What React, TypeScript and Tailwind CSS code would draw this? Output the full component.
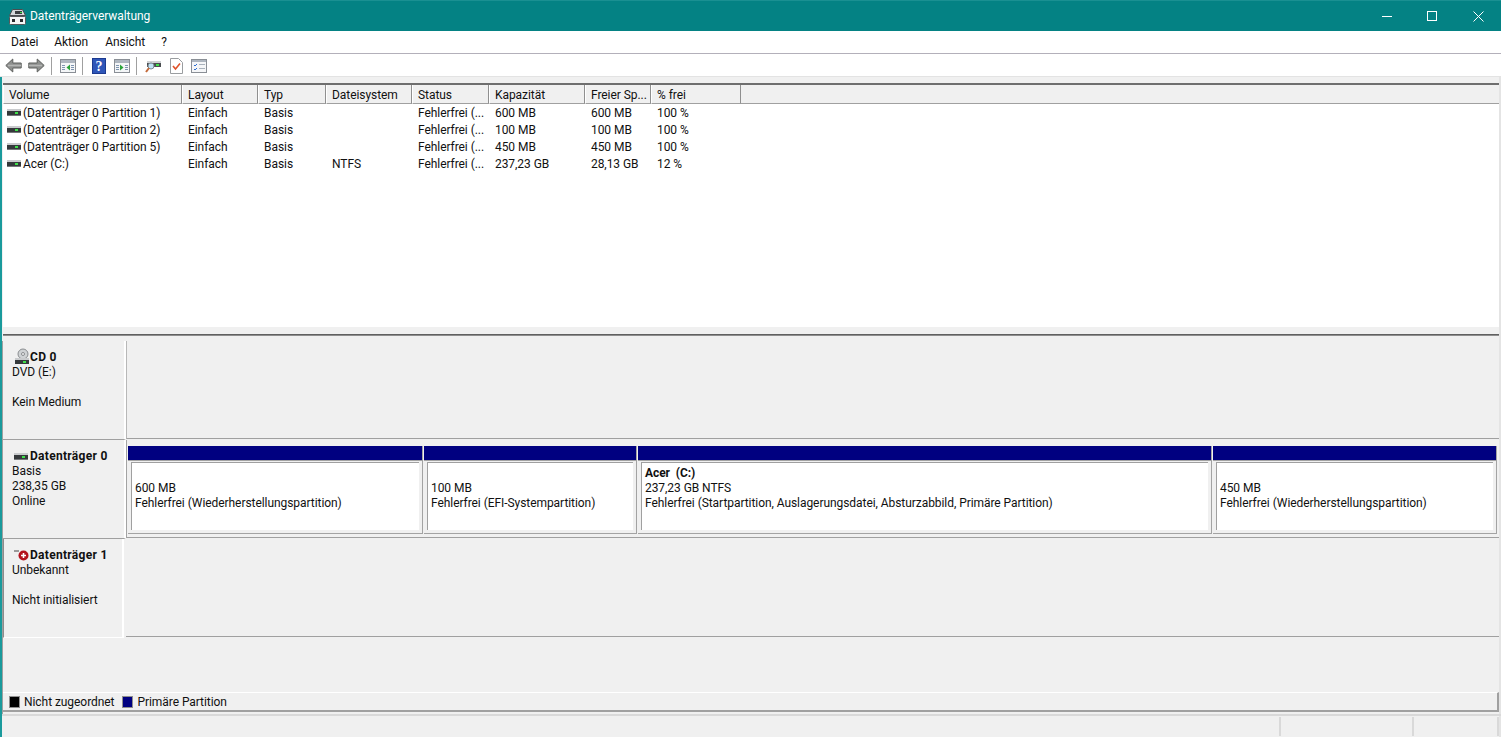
import React from "react";

function Drive({ className = "" }: { className?: string }) {
  return (
    <svg width="14" height="7" viewBox="0 0 14 7" className={className}>
      <rect x="0" y="0" width="14" height="2" fill="#c9cbcd" />
      <rect x="0" y="2" width="14" height="4" fill="#35393b" />
      <rect x="8" y="3" width="3" height="2" fill="#3fe04a" />
      <rect x="0" y="6" width="14" height="1" fill="#74777a" />
    </svg>
  );
}

function Win({ arrow }: { arrow: "l" | "r" }) {
  return (
    <svg width="16" height="14" viewBox="0 0 16 14">
      <rect x="0.5" y="0.5" width="15" height="13" fill="#f4f6f8" stroke="#8a8f96" />
      <rect x="1" y="1" width="14" height="3" fill="#aeb6c0" />
      <rect x="2" y="6" width="3" height="1" fill="#7d94b0" />
      <rect x="2" y="8" width="3" height="1" fill="#7d94b0" />
      <rect x="2" y="10" width="3" height="1" fill="#7d94b0" />
      <rect x="11" y="6" width="3" height="1" fill="#7d94b0" />
      <rect x="11" y="8" width="3" height="1" fill="#7d94b0" />
      <rect x="11" y="10" width="3" height="1" fill="#7d94b0" />
      <path d={arrow === "l" ? "M10 5.5v6L6.5 8.5z" : "M6 5.5v6l3.5-3z"} fill="#2aa33a" />
    </svg>
  );
}

function Arrow({ dir }: { dir: "l" | "r" }) {
  return (
    <svg width="17" height="15" viewBox="0 0 17 15">
      <path
        d={dir === "l" ? "M0.8 7.5l7-6.5v4h8.4v5H7.8v4z" : "M16.2 7.5l-7-6.5v4H0.8v5h8.4v4z"}
        fill="#8e908e"
        stroke="#5f615f"
        strokeWidth="1"
      />
      <path d={dir === "l" ? "M3 7.5h13" : "M1 7.5h13"} stroke="#b4b6b4" strokeWidth="1.5" />
    </svg>
  );
}

function Header({ w, label }: { w: string; label: string }) {
  return (
    <div className={`${w} shrink-0 h-full pl-[5px] pt-[1px] flex items-center whitespace-nowrap overflow-hidden border-r border-r-[#8f8f8f] border-b border-b-[#a0a0a0] border-l border-l-white`}>
      {label}
    </div>
  );
}

const rows = [
  ["(Datenträger 0 Partition 1)", "Einfach", "Basis", "", "Fehlerfrei (...", "600 MB", "600 MB", "100 %"],
  ["(Datenträger 0 Partition 2)", "Einfach", "Basis", "", "Fehlerfrei (...", "100 MB", "100 MB", "100 %"],
  ["(Datenträger 0 Partition 5)", "Einfach", "Basis", "", "Fehlerfrei (...", "450 MB", "450 MB", "100 %"],
  ["Acer (C:)", "Einfach", "Basis", "NTFS", "Fehlerfrei (...", "237,23 GB", "28,13 GB", "12 %"],
];

function Partition({ w, lines, bold, last }: { w: string; lines: string[]; bold?: string; last?: boolean }) {
  return (
    <div className={`${w} shrink-0 flex flex-col h-[88px] border-r border-r-[#a3a3a3] border-b border-b-[#a3a3a3] ${last ? "" : "mr-[1px]"}`}>
      <div className="h-[14px] shrink-0 bg-[#000080]" />
      <div className="h-px shrink-0 bg-[#a3a3a3]" />
      <div className="mt-px ml-[3px] mr-[3px] h-[68px] bg-white border-t border-l border-[#a0a0a0] pl-[3px] pt-[3px] leading-[15px]">
        <div className="h-[15px] font-bold whitespace-pre">{bold ?? ""}</div>
        {lines.map((l, i) => (
          <div key={i} className="h-[15px] whitespace-nowrap">{l}</div>
        ))}
      </div>
    </div>
  );
}

export default function App() {
  return (
    <div
      className="w-[1501px] h-[737px] overflow-hidden flex flex-col bg-[#f0f0f0] text-[12px] text-[#111] tracking-[-0.06px]"
      style={{ fontFamily: 'Roboto, "Liberation Sans", sans-serif' }}
    >
      {/* title bar */}
      <div className="h-[31px] shrink-0 bg-[#048284] border-t border-t-[#1a9092] flex items-center text-white">
        <svg width="17" height="16" viewBox="0 0 17 16" className="ml-[9px] mr-[4px] mt-[1px]">
          <path d="M3.5 0.5h10l3 6H0.5z" fill="#d5d8da" stroke="#4a4d50" />
          <rect x="6" y="2" width="7" height="3" fill="#3b3e41" />
          <rect x="11" y="3" width="2" height="1" fill="#3fe04a" />
          <rect x="0.5" y="7.5" width="16" height="8" rx="1" fill="#f5f6f6" stroke="#55585b" />
          <rect x="3" y="10" width="3" height="3" fill="#2a2c2e" />
          <rect x="11" y="10" width="3" height="3" fill="#2a2c2e" />
        </svg>
        <span>Datenträgerverwaltung</span>
        <div className="ml-auto flex items-center">
          <div className="w-[45px] flex justify-center">
            <div className="w-[10px] h-[1px] bg-white" />
          </div>
          <div className="w-[46px] flex justify-center">
            <div className="w-[10px] h-[10px] border border-white" />
          </div>
          <div className="w-[46px] flex justify-center">
            <svg width="11" height="11" viewBox="0 0 11 11">
              <path d="M0.5 0.5l10 10M10.5 0.5l-10 10" stroke="#fff" strokeWidth="1" />
            </svg>
          </div>
        </div>
      </div>

      {/* menu */}
      <div className="h-[23px] shrink-0 bg-white border-b border-b-[#b3b0ba] flex items-center pl-[11px] gap-[16px]">
        <span>Datei</span>
        <span>Aktion</span>
        <span className="ml-px">Ansicht</span>
        <span>?</span>
      </div>

      {/* toolbar */}
      <div className="h-[23px] shrink-0 bg-white border-b border-b-[#e3e3e3] flex items-center pl-[5px] pt-[1px]">
        <Arrow dir="l" />
        <div className="w-[6px]" />
        <Arrow dir="r" />
        <div className="w-px h-[18px] bg-[#a0a0a0] ml-[6px] mr-[8px]" />
        <Win arrow="l" />
        <div className="w-px h-[18px] bg-[#a0a0a0] ml-[6px] mr-[9px]" />
        <svg width="14" height="16" viewBox="0 0 14 16">
          <rect width="14" height="16" fill="#2f56b8" />
          <rect x="0.5" y="0.5" width="13" height="15" fill="none" stroke="#1c3a90" />
          <text x="7" y="13" textAnchor="middle" fontSize="14" fontWeight="bold" fill="#fff" fontFamily="Liberation Serif">?</text>
        </svg>
        <div className="w-[8px]" />
        <Win arrow="r" />
        <div className="w-px h-[18px] bg-[#a0a0a0] ml-[6px] mr-[8px]" />
        <svg width="16" height="16" viewBox="0 0 16 16">
          <rect x="2" y="3" width="14" height="6" fill="#4a4d50" />
          <rect x="2" y="3" width="14" height="2" fill="#cfd2d4" />
          <rect x="11" y="6" width="3" height="2" fill="#3fe04a" />
          <circle cx="6" cy="8" r="3" fill="#bfe3f5" stroke="#7d8a94" />
          <path d="M4 10l-3 4" stroke="#c46a3a" strokeWidth="2" />
        </svg>
        <div className="w-[9px]" />
        <svg width="13" height="16" viewBox="0 0 13 16">
          <path d="M0.5 0.5h8l4 4v11h-12z" fill="#fff" stroke="#9a9da0" />
          <path d="M3 8l2.5 3L10 5.5" fill="none" stroke="#e0522a" strokeWidth="1.6" />
        </svg>
        <div className="w-[8px]" />
        <svg width="16" height="14" viewBox="0 0 16 14">
          <rect x="0.5" y="0.5" width="15" height="13" fill="#f5f6f8" stroke="#8a8f96" />
          <rect x="1" y="1" width="14" height="2" fill="#aeb6c0" />
          <path d="M3 6l1 1 2-2M3 10l1 1 2-2" fill="none" stroke="#2f6fd0" strokeWidth="1" />
          <rect x="8" y="5" width="6" height="1" fill="#a9b2bc" />
          <rect x="8" y="9" width="6" height="1" fill="#a9b2bc" />
        </svg>
      </div>

      {/* main body */}
      <div className="flex-1 min-h-0 flex flex-col border-l-2 border-l-[#1a9a9c] border-r-2 border-r-[#e4e4e4]">
        <div className="h-[6px] shrink-0" />

        {/* volume list */}
        <div className="h-[244px] shrink-0 ml-px bg-white border-t-2 border-t-[#6e6e6e] flex flex-col overflow-hidden">
          <div className="h-[19px] shrink-0 bg-[#f0f0f0] flex items-stretch">
            <Header w="w-[179px]" label="Volume" />
            <Header w="w-[76px]" label="Layout" />
            <Header w="w-[68px]" label="Typ" />
            <Header w="w-[86px]" label="Dateisystem" />
            <Header w="w-[77px]" label="Status" />
            <Header w="w-[96px]" label="Kapazität" />
            <Header w="w-[66px]" label="Freier Sp..." />
            <Header w="w-[90px]" label="% frei" />
            <div className="flex-1 border-b border-b-[#a0a0a0]" />
          </div>
          <div>
            {rows.map((r, i) => (
              <div key={i} className="h-[17px] flex items-center whitespace-nowrap">
                <div className="w-[179px] shrink-0 pl-[4px] flex items-center gap-[2px]">
                  <Drive />
                  <span>{r[0]}</span>
                </div>
                <div className="w-[76px] shrink-0 pl-[6px]">{r[1]}</div>
                <div className="w-[68px] shrink-0 pl-[6px]">{r[2]}</div>
                <div className="w-[86px] shrink-0 pl-[6px]">{r[3]}</div>
                <div className="w-[77px] shrink-0 pl-[6px]">{r[4]}</div>
                <div className="w-[96px] shrink-0 pl-[6px]">{r[5]}</div>
                <div className="w-[66px] shrink-0 pl-[6px]">{r[6]}</div>
                <div className="w-[90px] shrink-0 pl-[6px]">{r[7]}</div>
              </div>
            ))}
          </div>
        </div>

        {/* lower pane */}
        <div className="flex-1 min-h-0 flex flex-col ml-px">
          {/* splitter */}
          <div className="h-[14px] shrink-0 pt-[7px]">
            <div className="h-px bg-[#606060]" />
            <div className="h-px bg-[#8e8e8e]" />
          </div>

          <div className="flex-1 min-h-0 flex flex-col border-l border-l-[#a0a0a0] -ml-px">
            {/* CD 0 */}
            <div className="h-[99px] shrink-0 flex">
              <div className="w-[123px] shrink-0 pl-[9px] pt-[9px] leading-[15px] border-r-2 border-r-white border-b border-b-[#a0a0a0]">
                <div className="flex items-center h-[15px] font-bold tracking-[0.3px]">
                  <svg width="16" height="17" viewBox="0 0 16 17" className="ml-[2px] -mt-[3px]">
                    <circle cx="9" cy="6" r="5" fill="#cfd2d4" stroke="#8a8d90" />
                    <circle cx="9" cy="6" r="1.5" fill="#f4f4f4" stroke="#8a8d90" />
                    <rect x="1" y="10" width="14" height="2" fill="#c9cbcd" />
                    <rect x="1" y="12" width="14" height="4" fill="#35393b" />
                    <rect x="9" y="13" width="3" height="2" fill="#3fe04a" />
                  </svg>
                  <span>CD 0</span>
                </div>
                <div className="h-[15px]">DVD (E:)</div>
                <div className="h-[15px]" />
                <div className="h-[15px]">Kein Medium</div>
              </div>
              <div className="flex-1 border-l border-l-[#b8b8b8] border-b border-b-[#a0a0a0] mb-px" />
            </div>

            {/* Disk 0 */}
            <div className="h-[99px] shrink-0 flex">
              <div className="w-[123px] shrink-0 pl-[9px] pt-[9px] leading-[15px] border-r-2 border-r-white border-b border-b-[#a0a0a0]">
                <div className="flex items-center h-[15px] font-bold gap-[2px] tracking-[0.3px]">
                  <Drive className="ml-[2px]" />
                  <span>Datenträger 0</span>
                </div>
                <div className="h-[15px]">Basis</div>
                <div className="h-[15px]">238,35 GB</div>
                <div className="h-[15px]">Online</div>
              </div>
              <div className="flex-1 border-l border-l-[#a3a3a3] border-b border-b-[#a0a0a0] mb-px pl-px pt-[6px] flex">
                <Partition w="w-[295px]" lines={["600 MB", "Fehlerfrei (Wiederherstellungspartition)"]} />
                <Partition w="w-[213px]" lines={["100 MB", "Fehlerfrei (EFI-Systempartition)"]} />
                <Partition w="w-[574px]" bold="Acer  (C:)" lines={["237,23 GB NTFS", "Fehlerfrei (Startpartition, Auslagerungsdatei, Absturzabbild, Primäre Partition)"]} />
                <Partition w="w-[284px]" last lines={["450 MB", "Fehlerfrei (Wiederherstellungspartition)"]} />
              </div>
            </div>

            {/* Disk 1 */}
            <div className="h-[99px] shrink-0 flex">
              <div className="w-[121px] shrink-0 pl-[8px] pt-[9px] leading-[15px] border-l border-l-[#8c8c8c] border-r-2 border-r-white border-b border-b-white">
                <div className="flex items-center h-[15px] font-bold tracking-[0.3px]">
                  <svg width="18" height="15" viewBox="0 0 18 15">
                    <rect x="2" y="2" width="5" height="2" fill="#9a9a9a" />
                    <circle cx="11.5" cy="7.5" r="5" fill="#b3121d" />
                    <path d="M9 7.5h5M11.5 5v5" stroke="#fff" strokeWidth="1.6" />
                  </svg>
                  <span>Datenträger 1</span>
                </div>
                <div className="h-[15px]">Unbekannt</div>
                <div className="h-[15px]" />
                <div className="h-[15px]">Nicht initialisiert</div>
              </div>
              <div className="flex-1 ml-[2px] border-b border-b-[#a0a0a0] mb-px" />
            </div>

            <div className="flex-1" />

            {/* legend */}
            <div className="h-[20px] shrink-0 border-t border-t-white border-b-2 border-b-[#a0a0a0] border-r-2 border-r-[#a0a0a0] flex items-center pl-[6px] whitespace-nowrap">
              <div className="w-[11px] h-[12px] bg-black border border-[#8f8f8f]" />
              <span className="ml-[4px]">Nicht zugeordnet</span>
              <div className="w-[11px] h-[12px] bg-[#000080] border border-[#8f8f8f] ml-[8px]" />
              <span className="ml-[4px]">Primäre Partition</span>
            </div>
            <div className="h-[2px] shrink-0" />
          </div>
        </div>

        {/* status */}
        <div className="h-[23px] shrink-0 -mr-[2px] border-t-2 border-t-[#d9d9d9] flex items-stretch py-[1px]">
          <div className="w-[1279px] border-r-2 border-r-[#d9d9d9]" />
          <div className="w-[133px] border-r-2 border-r-[#d9d9d9]" />
          <div className="w-[85px] border-r-2 border-r-[#d9d9d9]" />
        </div>
      </div>
    </div>
  );
}
